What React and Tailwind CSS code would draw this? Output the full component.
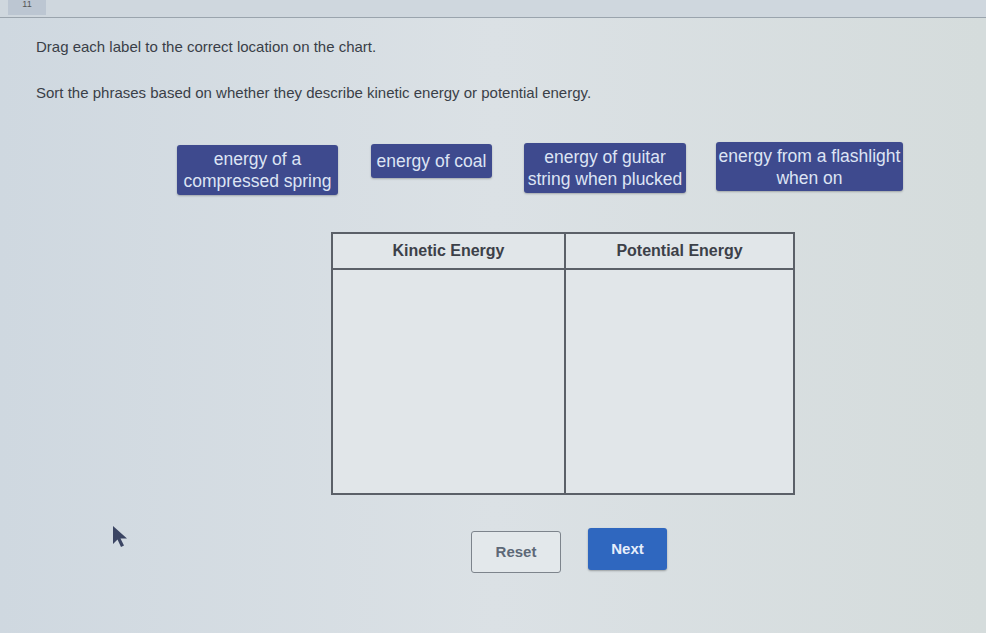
const labels = [
  { id: 1, lines: ["energy of a", "compressed spring"], w: "w-[161px]", h: "h-[50px]", mt: "mt-[3px]" },
  { id: 2, lines: ["energy of coal"], w: "w-[121px]", h: "h-[34px]", mt: "mt-[2px]" },
  { id: 3, lines: ["energy of guitar", "string when plucked"], w: "w-[162px]", h: "h-[50px]", mt: "mt-[1px]" },
  { id: 4, lines: ["energy from a flashlight", "when on"], w: "w-[187px]", h: "h-[49px]", mt: "mt-0" },
];

function Label({ item }) {
  return (
    <div
      className={`${item.w} ${item.h} ${item.mt} flex flex-col items-center justify-center rounded-[3px] bg-[#3e4a8e] text-[17.5px] leading-[22px] text-[#dde4f4] shadow-[0_1px_2px_rgba(0,0,0,0.25)]`}
    >
      {item.lines.map((l) => (
        <span key={l} className="whitespace-nowrap">{l}</span>
      ))}
    </div>
  );
}

function Cursor() {
  return (
    <svg className="absolute left-[112px] top-[-3px]" width="18" height="24" viewBox="0 0 18 24">
      <path d="M1 1 L1 19 L5.5 14.5 L9 22 L12 20.5 L8.5 13.5 L15 13.5 Z" fill="#3b4563" />
    </svg>
  );
}

export default function App() {
  return (
    <div className="min-h-[633px] w-full bg-gradient-to-r from-[#cfd8e0] via-[#dbe1e5] to-[#d5dcdc] font-['Liberation_Sans',Arial,sans-serif] text-[#3a3f48]">
      {/* top strip */}
      <div className="flex h-[18px] border-b border-[#9aa4ad] bg-[#cfd7de]">
        <div className="ml-[8px] flex h-[15px] w-[38px] items-start justify-center bg-[#bcc6d2] text-[9px] leading-[8px] text-[#555]">
          11
        </div>
      </div>

      <div className="pl-[36px] pt-[20px] text-[15px]">
        <p className="leading-[18px]">Drag each label to the correct location on the chart.</p>
        <p className="mt-[28px] leading-[18px]">Sort the phrases based on whether they describe kinetic energy or potential energy.</p>
      </div>

      {/* labels */}
      <div className="mt-[40px] flex items-start pl-[177px]">
        <Label item={labels[0]} />
        <div className="ml-[33px]"><Label item={labels[1]} /></div>
        <div className="ml-[32px]"><Label item={labels[2]} /></div>
        <div className="ml-[30px]"><Label item={labels[3]} /></div>
      </div>

      {/* chart */}
      <div className="mt-[37px] pl-[331px]">
        <div className="grid h-[263px] w-[464px] grid-cols-[233px_1fr] grid-rows-[36px_1fr] border-2 border-[#5b6068] bg-[#e1e6e9]">
          <div className="flex items-center justify-center border-b-2 border-r-2 border-[#5b6068] text-[16px] font-bold text-[#3c4048]">
            Kinetic Energy
          </div>
          <div className="flex items-center justify-center border-b-2 border-[#5b6068] text-[16px] font-bold text-[#3c4048]">
            Potential Energy
          </div>
          <div className="border-r-2 border-[#5b6068]" />
          <div />
        </div>
      </div>

      {/* bottom row */}
      <div className="relative mt-[33px] flex items-start pl-[471px]">
        <Cursor />
        <button className="mt-[3px] h-[42px] w-[90px] rounded-[3px] border border-[#7d848c] bg-[#e3e8eb] text-[15px] font-bold text-[#5d6877]">
          Reset
        </button>
        <button className="ml-[27px] h-[42px] w-[79px] rounded-[3px] bg-[#2f67bf] text-[15px] font-bold text-[#e6eefb] shadow-[0_1px_2px_rgba(0,0,0,0.3)]">
          Next
        </button>
      </div>
    </div>
  );
}
